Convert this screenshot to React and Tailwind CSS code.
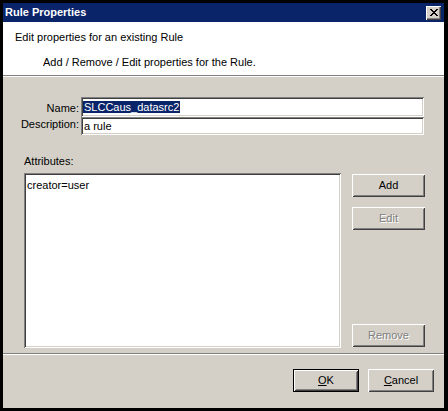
import React from "react";

const font = { fontFamily: '"Liberation Sans", Arial, sans-serif' };

function Btn({ children, disabled, isDefault, className = "" }) {
  const bevel =
    "shadow-[inset_1px_1px_#ffffff,inset_-1px_-1px_#404040,inset_2px_2px_#d4d0c8,inset_-2px_-2px_#808080]";
  const inner = (
    <div
      className={`flex h-full w-full items-center justify-center bg-[#d4d0c8] text-[11px] ${bevel} ${
        disabled ? "text-[#808080] [text-shadow:1px_1px_#ffffff]" : "text-black"
      }`}
    >
      {children}
    </div>
  );
  if (isDefault) {
    return <div className={`border border-black ${className}`}>{inner}</div>;
  }
  return <div className={className}>{inner}</div>;
}

const sunken =
  "shadow-[inset_1px_1px_#808080,inset_-1px_-1px_#ffffff,inset_2px_2px_#404040,inset_-2px_-2px_#d4d0c8]";

export default function App() {
  return (
    <div
      className="flex h-[411px] w-[448px] flex-col bg-black pb-[3px] pl-[3px] pr-[4px] pt-[3px] select-none"
      style={font}
    >
      {/* Title bar */}
      <div className="flex h-[19px] items-center justify-between bg-[#0a246a] pl-[2px] pr-[3px]">
        <span className="text-[11px] font-bold leading-none text-white">Rule Properties</span>
        <div className="flex h-[14px] w-[15px] items-center justify-center bg-[#d4d0c8] shadow-[inset_1px_1px_#ffffff,inset_-1px_-1px_#404040,inset_-2px_-2px_#808080]">
          <svg width="8" height="7" viewBox="0 0 8 7" shapeRendering="crispEdges">
            <path
              fill="#000"
              d="M0 0h2v1h-2zM6 0h2v1h-2zM1 1h2v1h-2zM5 1h2v1h-2zM2 2h4v1h-4zM3 3h2v1h-2zM2 4h4v1h-4zM1 5h2v1h-2zM5 5h2v1h-2zM0 6h2v1h-2zM6 6h2v1h-2z"
            />
          </svg>
        </div>
      </div>

      {/* Header */}
      <div className="flex h-[53px] flex-col bg-white text-[11px] text-black">
        <div className="mt-[9px] pl-[12px] leading-[13px]">Edit properties for an existing Rule</div>
        <div className="mt-[12px] pl-[40px] leading-[13px]">Add / Remove / Edit properties for the Rule.</div>
      </div>
      <div className="h-px bg-[#808080]" />
      <div className="h-px bg-white" />

      {/* Body */}
      <div className="flex flex-1 flex-col bg-[#d4d0c8] text-[11px] text-black">
        <div className="mt-[20px] flex">
          <div className="w-[76px] pt-[5px] text-right leading-[13px]">Name:</div>
          <div className={`ml-[2px] flex h-[20px] w-[343px] items-center bg-white pl-[2px] ${sunken}`}>
            <span className="bg-[#0a246a] px-px leading-[12px] text-white">SLCCaus_datasrc2</span>
          </div>
        </div>
        <div className="flex">
          <div className="w-[76px] pt-px text-right leading-[13px]">Description:</div>
          <div className={`ml-[2px] flex h-[18px] w-[343px] items-center bg-white pl-[3px] ${sunken}`}>
            <span className="leading-[12px]">a rule</span>
          </div>
        </div>

        <div className="mt-[20px] pl-[21px] leading-[13px]">Attributes:</div>

        <div className="mt-[5px] flex pl-[21px]">
          <div className={`h-[175px] w-[317px] bg-white pl-[3px] pt-[6px] ${sunken}`}>
            <div className="leading-[13px]">creator=user</div>
          </div>
          <div className="ml-[11px] flex w-[73px] flex-col">
            <Btn className="mt-px h-[23px] w-[73px]">Add</Btn>
            <Btn disabled className="mt-[10px] h-[23px] w-[73px]">
              Edit
            </Btn>
            <div className="flex-1" />
            <Btn disabled className="mb-px h-[23px] w-[73px]">
              Remove
            </Btn>
          </div>
        </div>

        <div className="mt-[5px] h-px bg-[#808080]" />
        <div className="h-px bg-white" />

        <div className="mt-[14px] flex justify-end pr-[10px]">
          <Btn isDefault className="h-[23px] w-[66px]">
            <span>
              <span className="underline underline-offset-1">O</span>K
            </span>
          </Btn>
          <Btn className="ml-[9px] h-[23px] w-[66px]">
            <span>
              <span className="underline underline-offset-1">C</span>ancel
            </span>
          </Btn>
        </div>
      </div>
    </div>
  );
}
